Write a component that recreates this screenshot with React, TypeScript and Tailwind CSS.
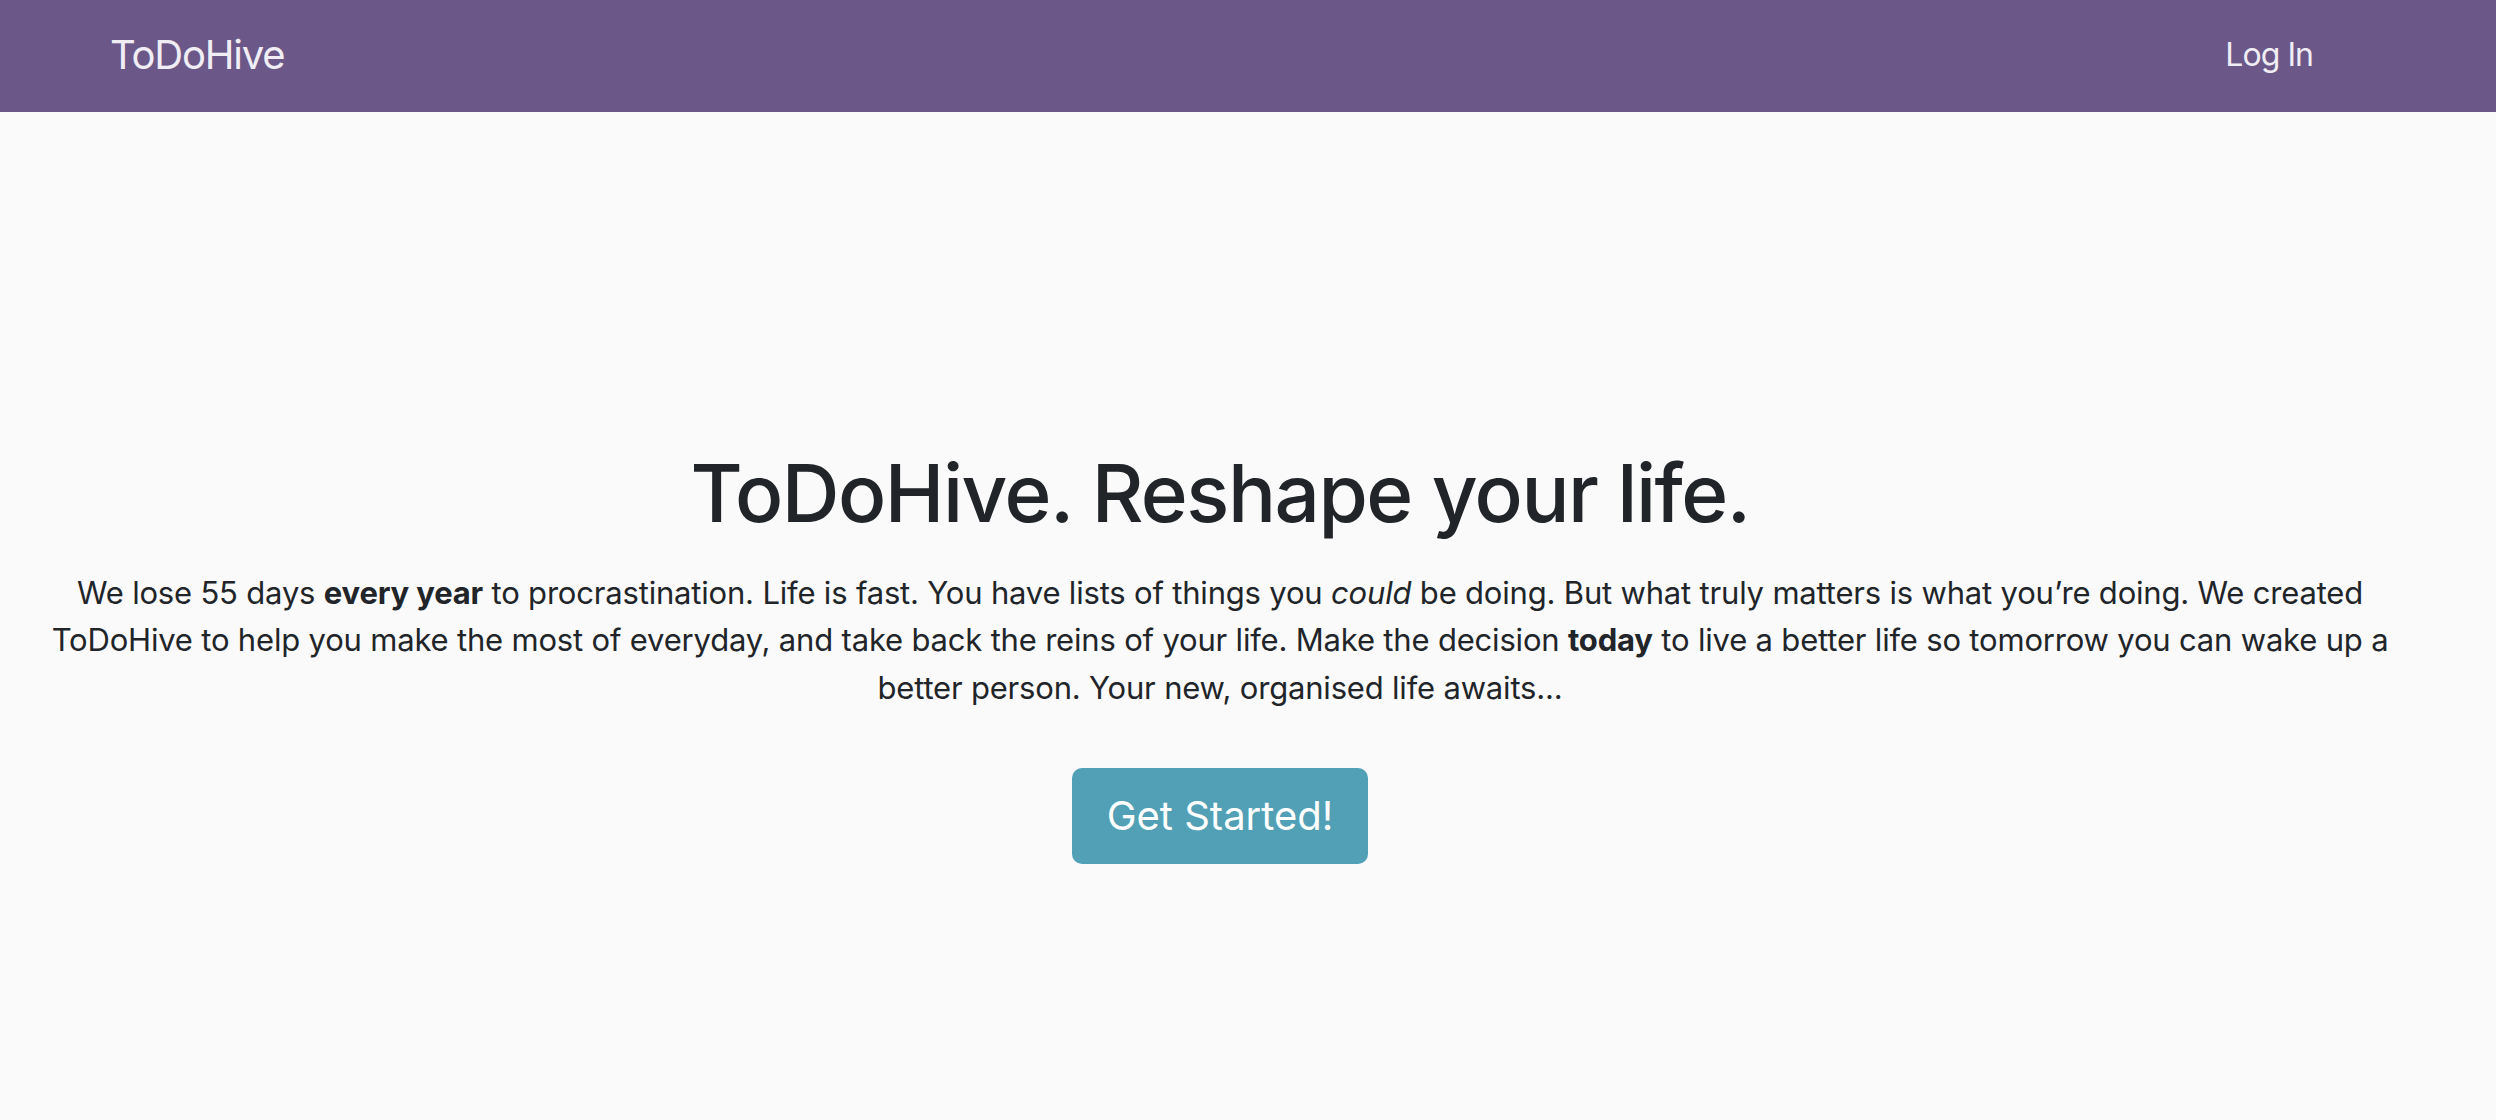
export default function App() {
  return (
    <div
      className="min-h-screen bg-[#fafafa] text-[#212529]"
      style={{ fontFamily: "Inter, 'Noto Sans', sans-serif" }}
    >
      {/* Navbar */}
      <nav className="h-[112px] bg-[#6b5888] flex items-center justify-between pl-[110px] pr-[183px]">
        <a href="#" className="text-[40px] tracking-[-0.03em] text-[#f0edf4] leading-none pb-[2px]">
          ToDoHive
        </a>
        <a href="#" className="text-[32px] tracking-[-0.03em] text-[#f0edf4] leading-none pb-[2px]">
          Log In
        </a>
      </nav>

      {/* Hero */}
      <main className="flex flex-col items-center text-center pt-[333px] pl-[40px] pr-[96px]">
        <h1 className="text-[80px] leading-[1.2] font-medium tracking-[-0.019em] mb-[28px]">
          ToDoHive. Reshape your life.
        </h1>
        <p className="text-[31px] leading-[47.4px] tracking-[-0.006em]">
          We lose 55 days <strong className="font-bold">every year</strong> to procrastination. Life is
          fast. You have lists of things you <em>could</em> be doing. But what truly matters is what
          you’re doing. We created ToDoHive to help you make the most of everyday, and take back the
          reins of your life. Make the decision <strong className="font-bold">today</strong> to live a
          better life so tomorrow you can wake up a better person. Your new, organised life awaits...
        </p>
        <button className="mt-[57px] w-[296px] h-[96px] rounded-[10px] bg-[#51a0b5] text-white text-[40px]">
          Get Started!
        </button>
      </main>
    </div>
  );
}
